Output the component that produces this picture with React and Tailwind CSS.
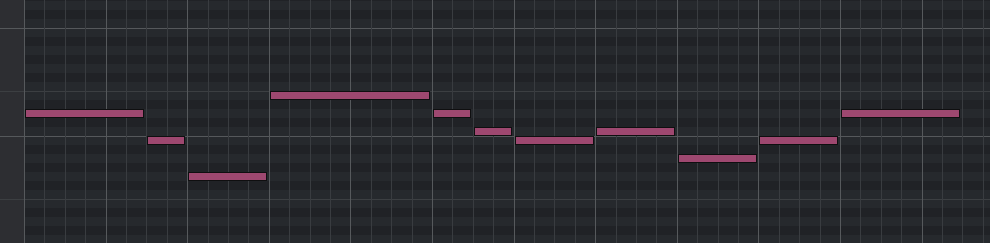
import React from 'react';

const BEAT = 20.4;
const ORIGIN = 24;
const ROW_H = 9;
const FIRST_ROW_Y = -8;

// rows from top to bottom, as seen in the roll
const pitches = ['D#', 'D', 'C#', 'C', 'B', 'A#', 'A', 'G#', 'G', 'F#', 'F', 'E'];
const rows = Array.from({ length: 28 }, (_, i) => pitches[i % 12]);

const notes = [
    { row: 13, start: 0, len: 6 },
    { row: 16, start: 6, len: 2 },
    { row: 20, start: 8, len: 4 },
    { row: 11, start: 12, len: 8 },
    { row: 13, start: 20, len: 2 },
    { row: 15, start: 22, len: 2 },
    { row: 16, start: 24, len: 4 },
    { row: 15, start: 28, len: 4 },
    { row: 18, start: 32, len: 4 },
    { row: 16, start: 36, len: 4 },
    { row: 13, start: 40, len: 6 },
];

const beats = Array.from({ length: 48 }, (_, k) => k);

const Row = ({ pitch }) => {
    const black = pitch.includes('#');
    let line = '';
    if (pitch === 'B') line = 'border-t border-[#55585b]';
    else if (pitch === 'E') line = 'border-t border-[#3c3f42]';
    return (
        <div className={`flex h-[9px] shrink-0 ${line}`}>
            <div className="w-[24px] shrink-0 bg-[#2d2e32]" />
            <div className={black ? 'flex-1 bg-[#202226]' : 'flex-1 bg-[#26292d]'} />
        </div>
    );
};

const App = () => {
    return (
        <div className="relative h-[243px] w-[990px] overflow-hidden bg-[#25282c]" style={{ fontFamily: '"Liberation Sans", sans-serif' }}>
            <div className="mt-[-8px] flex flex-col">
                {rows.map((p, i) => <Row key={i} pitch={p} />)}
            </div>

            {/* beat / bar lines */}
            {beats.map((k) => (
                <div
                    key={k}
                    className={k % 4 === 0 ? 'absolute top-0 h-full w-px bg-[#56595c]' : 'absolute top-0 h-full w-px bg-[#393c40]'}
                    style={{ left: Math.round(ORIGIN + BEAT * k) }}
                />
            ))}

            {/* notes */}
            {notes.map((n, i) => (
                <div
                    key={i}
                    className="absolute h-[9px] border border-[#0f0f10] bg-[#9e4870]"
                    style={{
                        top: FIRST_ROW_Y + ROW_H * n.row,
                        left: Math.round(ORIGIN + BEAT * n.start) + 1,
                        width: Math.round(BEAT * n.len) - 3,
                    }}
                />
            ))}
        </div>
    );
};

export default App;
